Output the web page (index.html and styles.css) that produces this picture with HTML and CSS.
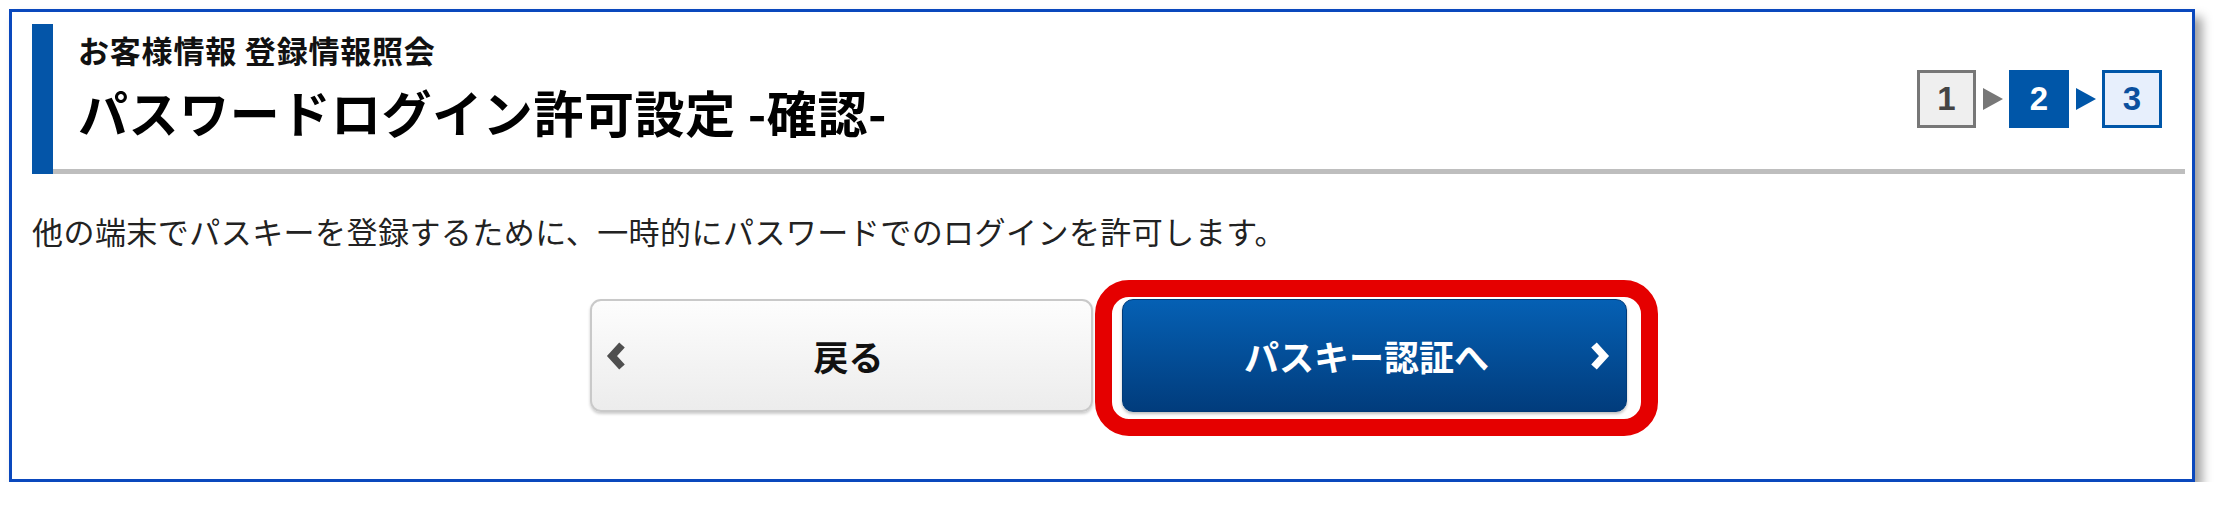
FILE: index.html
```html
<!DOCTYPE html>
<html lang="ja">
<head>
<meta charset="utf-8">
<title>パスワードログイン許可設定 -確認-</title>
<link rel="stylesheet" href="styles.css">
</head>
<body>
<div class="frame">
  <div class="page-header">
    <div class="bar"></div>
    <div class="header-main">
      <div class="titles">
        <div class="subtitle">お客様情報 登録情報照会</div>
        <h1 class="title">パスワードログイン許可設定 -確認-</h1>
      </div>
      <div class="steps">
        <span class="step step-done">1</span>
        <svg class="step-arrow arrow-gray" width="20" height="22" viewBox="0 0 20 22"><polygon points="0,0 20,11 0,22"/></svg>
        <span class="step step-current">2</span>
        <svg class="step-arrow arrow-blue" width="20" height="22" viewBox="0 0 20 22"><polygon points="0,0 20,11 0,22"/></svg>
        <span class="step step-next">3</span>
      </div>
    </div>
  </div>
  <p class="lead">他の端末でパスキーを登録するために、一時的にパスワードでのログインを許可します。</p>
  <div class="actions">
    <button class="btn btn-back" type="button">
      <svg class="chev" width="22" height="30" viewBox="0 0 22 30"><polyline points="16,4 6,15 16,26"/></svg>
      <span class="btn-label">戻る</span>
      <span></span>
    </button>
    <div class="next-wrap">
      <button class="btn btn-next" type="button">
        <span></span>
        <span class="btn-label">パスキー認証へ</span>
        <svg class="chev chev-right" width="22" height="30" viewBox="0 0 22 30"><polyline points="6,4 16,15 6,26"/></svg>
      </button>
      <div class="highlight"></div>
    </div>
  </div>
</div>
</body>
</html>
```
FILE: styles.css
```css
html, body {
  margin: 0;
  padding: 0;
  background: #ffffff;
}

body {
  font-family: "Noto Sans CJK JP", "Noto Sans", sans-serif;
  color: #111;
}

.frame {
  margin: 9px 0 0 9px;
  width: 2186px;
  box-sizing: border-box;
  border: 3px solid #0a48bd;
  background: #fff;
  padding: 12px 7px 67px 20px;
  box-shadow: 7px 8px 10px rgba(0, 0, 0, 0.38);
}

.page-header {
  display: flex;
}

.bar {
  width: 21px;
  background: #0455a8;
  flex: none;
}

.header-main {
  flex: 1;
  display: flex;
  justify-content: space-between;
  align-items: flex-start;
  padding: 6px 23px 28px 25px;
  border-bottom: 5px solid #bebebe;
}

.subtitle {
  font-size: 31px;
  line-height: 40px;
  font-weight: 700;
  letter-spacing: 0.8px;
  color: #111;
}

.title {
  margin: 11px 0 0;
  font-size: 50px;
  line-height: 60px;
  font-weight: 700;
  letter-spacing: 0.6px;
  color: #000;
}

.steps {
  display: flex;
  align-items: center;
  gap: 6.5px;
  margin-top: 40px;
}

.step {
  width: 59px;
  height: 58px;
  box-sizing: border-box;
  display: flex;
  align-items: center;
  justify-content: center;
  font-family: "Liberation Sans", Arial, sans-serif;
  font-weight: 700;
  font-size: 33px;
}

.step-done {
  background: #efefef;
  border: 3px solid #777;
  color: #444;
}

.step-current {
  width: 60px;
  background: #0056a8;
  color: #fff;
}

.step-next {
  width: 60px;
  background: #e7effc;
  border: 3px solid #0056a8;
  color: #0a4f9e;
}

.step-arrow {
  display: block;
}

.arrow-gray {
  fill: #777;
}

.arrow-blue {
  fill: #0056a8;
}

.lead {
  margin: 37px 0 0;
  font-size: 31px;
  line-height: 40px;
  letter-spacing: 0.45px;
  color: #222;
}

.actions {
  display: flex;
  justify-content: center;
  gap: 29px;
  margin-top: 48px;
}

.btn {
  width: 503px;
  height: 113px;
  box-sizing: border-box;
  border-radius: 11px;
  display: grid;
  grid-template-columns: 1fr auto 1fr;
  align-items: center;
  font-family: "Noto Sans CJK JP", "Noto Sans", sans-serif;
  font-size: 35px;
  font-weight: 700;
  cursor: pointer;
  margin: 0;
}

.btn-back {
  padding: 0 0 0 14px;
  border: 2px solid #c9c9c9;
  background: linear-gradient(#fdfdfd, #ececec);
  color: #111;
  box-shadow: 0 2px 3px rgba(0, 0, 0, 0.2);
}

.btn-back .chev {
  stroke: #4f4f4f;
}

.next-wrap {
  position: relative;
}

.btn-next {
  width: 505px;
  padding: 0 16px 0 0;
  border: 1px solid #003a78;
  background: linear-gradient(#0560b4, #013c7c);
  color: #fff;
  box-shadow: 0 2px 3px rgba(0, 0, 0, 0.25);
}

.chev {
  display: block;
  fill: none;
  stroke-width: 7.5;
  stroke-linejoin: miter;
  stroke-linecap: butt;
}

.chev-right {
  justify-self: end;
  stroke: #fff;
}

.btn-label {
  display: block;
  line-height: 1;
}

.highlight {
  position: absolute;
  left: -27px;
  top: -19px;
  width: 563px;
  height: 156px;
  box-sizing: border-box;
  border: 17px solid #e50000;
  border-radius: 34px;
  pointer-events: none;
}
```
